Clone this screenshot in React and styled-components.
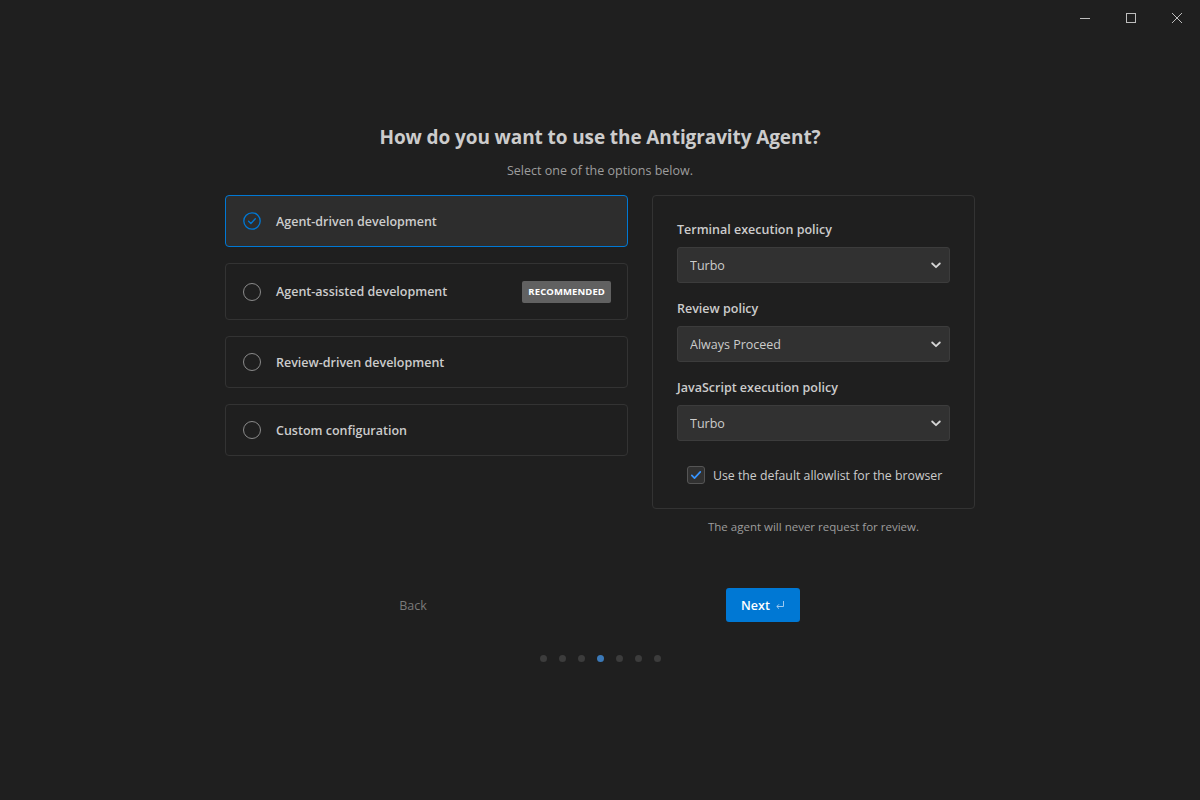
import React, { useState } from 'react';
import styled, { createGlobalStyle } from 'styled-components';

const Global = createGlobalStyle`
  html, body {
    margin: 0;
    padding: 0;
    background: #1f1f1f;
    font-family: "Open Sans", "Noto Sans", sans-serif;
    color: #cccccc;
  }
  * { box-sizing: border-box; }
`;

const opciones = [
  { id: 'driven', label: 'Agent-driven development' },
  { id: 'assisted', label: 'Agent-assisted development', badge: 'RECOMMENDED' },
  { id: 'review', label: 'Review-driven development' },
  { id: 'custom', label: 'Custom configuration' },
];

const politicas = [
  { label: 'Terminal execution policy', value: 'Turbo', options: ['Off', 'Auto', 'Turbo'] },
  { label: 'Review policy', value: 'Always Proceed', options: ['Always Proceed', 'Agent Decides', 'Request Review'] },
  { label: 'JavaScript execution policy', value: 'Turbo', options: ['Off', 'Auto', 'Turbo'] },
];

export default function App() {
  const [seleccion, setSeleccion] = useState('driven');
  const [allowlist, setAllowlist] = useState(true);

  return (
    <Pagina>
      <Global />
      <BarraTitulo>
        <BotonVentana aria-label="Minimize">
          <svg width="12" height="12" viewBox="0 0 12 12"><path d="M1 6.5h10" stroke="#bdbdbd" strokeWidth="1" /></svg>
        </BotonVentana>
        <BotonVentana aria-label="Maximize">
          <svg width="12" height="12" viewBox="0 0 12 12"><rect x="1.5" y="1.5" width="9" height="9" fill="none" stroke="#bdbdbd" strokeWidth="1" /></svg>
        </BotonVentana>
        <BotonVentana aria-label="Close">
          <svg width="12" height="12" viewBox="0 0 12 12"><path d="M1 1l10 10M11 1L1 11" stroke="#bdbdbd" strokeWidth="1" /></svg>
        </BotonVentana>
      </BarraTitulo>

      <Contenido>
        <Titulo>How do you want to use the Antigravity Agent?</Titulo>
        <Subtitulo>Select one of the options below.</Subtitulo>

        <Columnas>
          <Lista>
            {opciones.map((op) => (
              <Tarjeta
                key={op.id}
                $activa={seleccion === op.id}
                $alta={!!op.badge}
                onClick={() => setSeleccion(op.id)}
              >
                {seleccion === op.id ? (
                  <svg width="18" height="18" viewBox="0 0 18 18">
                    <circle cx="9" cy="9" r="8.2" fill="none" stroke="#0078d4" strokeWidth="1.3" />
                    <path d="M5.6 9.2l2.3 2.3 4.4-4.7" fill="none" stroke="#0078d4" strokeWidth="1.3" strokeLinecap="round" strokeLinejoin="round" />
                  </svg>
                ) : (
                  <Radio />
                )}
                <TextoTarjeta>{op.label}</TextoTarjeta>
                {op.badge && <Insignia>{op.badge}</Insignia>}
              </Tarjeta>
            ))}
          </Lista>

          <ColumnaDerecha>
            <Panel>
              {politicas.map((p) => (
                <Campo key={p.label}>
                  <Etiqueta>{p.label}</Etiqueta>
                  <SelectCaja>
                    <Select defaultValue={p.value}>
                      {p.options.map((o) => (
                        <option key={o}>{o}</option>
                      ))}
                    </Select>
                    <Chevron width="10" height="7" viewBox="0 0 10 7">
                      <path d="M1.2 1.5L5 5.2l3.8-3.7" fill="none" stroke="#d4d4d4" strokeWidth="1.8" strokeLinecap="round" strokeLinejoin="round" />
                    </Chevron>
                  </SelectCaja>
                </Campo>
              ))}
              <FilaCheck onClick={() => setAllowlist(!allowlist)}>
                <Casilla>
                  {allowlist && (
                    <svg width="12" height="12" viewBox="0 0 12 12">
                      <path d="M1.8 6.4l2.7 2.7 5.8-6.2" fill="none" stroke="#3794ff" strokeWidth="1.7" strokeLinecap="round" strokeLinejoin="round" />
                    </svg>
                  )}
                </Casilla>
                <span>Use the default allowlist for the browser</span>
              </FilaCheck>
            </Panel>
            <Nota>The agent will never request for review.</Nota>
          </ColumnaDerecha>
        </Columnas>

        <Acciones>
          <BotonAtras>Back</BotonAtras>
          <BotonSiguiente>
            Next
            <svg width="10" height="10" viewBox="0 0 10 10">
              <path d="M8.5 1v5.5H2M4 4.3L1.8 6.5 4 8.7" fill="none" stroke="#9cc8f0" strokeWidth="1" />
            </svg>
          </BotonSiguiente>
        </Acciones>

        <Puntos>
          {[0, 1, 2, 3, 4, 5, 6].map((i) => (
            <Punto key={i} $activo={i === 3} />
          ))}
        </Puntos>
      </Contenido>
    </Pagina>
  );
}

// Estilos
const Pagina = styled.div`
  width: 1200px;
  height: 800px;
  background: #1f1f1f;
  display: flex;
  flex-direction: column;
`;

const BarraTitulo = styled.div`
  height: 35px;
  display: flex;
  justify-content: flex-end;
`;

const BotonVentana = styled.button`
  width: 46px;
  height: 35px;
  border: none;
  background: transparent;
  display: flex;
  align-items: center;
  justify-content: center;
  padding: 0;
  cursor: default;
`;

const Contenido = styled.div`
  display: flex;
  flex-direction: column;
  align-items: center;
  padding-top: 88px;
`;

const Titulo = styled.h1`
  margin: 0;
  font-size: 19px;
  font-weight: 700;
  color: #cccccc;
  line-height: 28px;
  letter-spacing: -0.1px;
`;

const Subtitulo = styled.p`
  margin: 11px 0 0;
  font-size: 12.5px;
  color: #9d9d9d;
  line-height: 18px;
`;

const Columnas = styled.div`
  margin-top: 15px;
  display: flex;
  gap: 24px;
  align-items: flex-start;
`;

const Lista = styled.div`
  width: 403px;
  display: flex;
  flex-direction: column;
  gap: 16px;
`;

const Tarjeta = styled.div`
  height: ${(p) => (p.$alta ? '57px' : '52px')};
  display: flex;
  align-items: center;
  padding: 0 16px 0 17px;
  border: 1px solid ${(p) => (p.$activa ? '#0078d4' : '#333333')};
  border-radius: 4px;
  background: ${(p) => (p.$activa ? '#2d2d2d' : '#1f1f1f')};
  cursor: pointer;
`;

const Radio = styled.span`
  width: 18px;
  height: 18px;
  border-radius: 50%;
  border: 1.3px solid #8a8a8a;
  flex-shrink: 0;
`;

const TextoTarjeta = styled.span`
  margin-left: 15px;
  font-size: 12.5px;
  font-weight: 600;
  color: #cccccc;
  flex: 1;
`;

const Insignia = styled.span`
  background: #616161;
  color: #ffffff;
  font-size: 9.5px;
  font-weight: 700;
  padding: 0 6px;
  height: 22px;
  line-height: 22px;
  border-radius: 2px;
  letter-spacing: 0.1px;
`;

const ColumnaDerecha = styled.div`
  width: 323px;
  display: flex;
  flex-direction: column;
  align-items: center;
`;

const Panel = styled.div`
  width: 100%;
  border: 1px solid #333333;
  border-radius: 4px;
  padding: 25px 24px 24px;
  display: flex;
  flex-direction: column;
  gap: 17px;
`;

const Campo = styled.div`
  display: flex;
  flex-direction: column;
  gap: 8px;
`;

const Etiqueta = styled.label`
  font-size: 12.5px;
  font-weight: 600;
  color: #cccccc;
  line-height: 18px;
`;

const SelectCaja = styled.div`
  position: relative;
  width: 273px;
`;

const Select = styled.select`
  appearance: none;
  width: 100%;
  height: 36px;
  background: #313131;
  border: 1px solid #3c3c3c;
  border-radius: 3px;
  color: #cccccc;
  font-family: "Open Sans", "Noto Sans", sans-serif;
  font-size: 12.5px;
  padding: 0 30px 0 12px;
  outline: none;
`;

const Chevron = styled.svg`
  position: absolute;
  right: 9px;
  top: 15px;
  pointer-events: none;
`;

const FilaCheck = styled.div`
  display: flex;
  align-items: center;
  gap: 8px;
  padding-left: 10px;
  margin-top: 8px;
  font-size: 12.3px;
  color: #cccccc;
  cursor: pointer;
`;

const Casilla = styled.span`
  width: 18px;
  height: 18px;
  border-radius: 3px;
  border: 1px solid #555555;
  background: #313131;
  display: flex;
  align-items: center;
  justify-content: center;
`;

const Nota = styled.p`
  margin: 10px 0 0;
  font-size: 11.5px;
  color: #9d9d9d;
`;

const Acciones = styled.div`
  margin-top: 54px;
  width: 448px;
  padding-right: 24px;
  display: flex;
  align-items: center;
  justify-content: space-between;
`;

const BotonAtras = styled.button`
  width: 74px;
  height: 34px;
  border: none;
  background: transparent;
  color: #7a7a7a;
  font-family: "Open Sans", "Noto Sans", sans-serif;
  font-size: 12.5px;
  cursor: pointer;
`;

const BotonSiguiente = styled.button`
  width: 74px;
  height: 34px;
  border: none;
  border-radius: 3px;
  background: #0078d4;
  color: #ffffff;
  font-family: "Open Sans", "Noto Sans", sans-serif;
  font-size: 12.5px;
  font-weight: 600;
  display: flex;
  align-items: center;
  justify-content: center;
  gap: 5px;
  cursor: pointer;
`;

const Puntos = styled.div`
  margin-top: 33px;
  display: flex;
  gap: 12px;
`;

const Punto = styled.span`
  width: 7px;
  height: 7px;
  border-radius: 50%;
  background: ${(p) => (p.$activo ? '#3b79b8' : '#3c3c3c')};
`;
